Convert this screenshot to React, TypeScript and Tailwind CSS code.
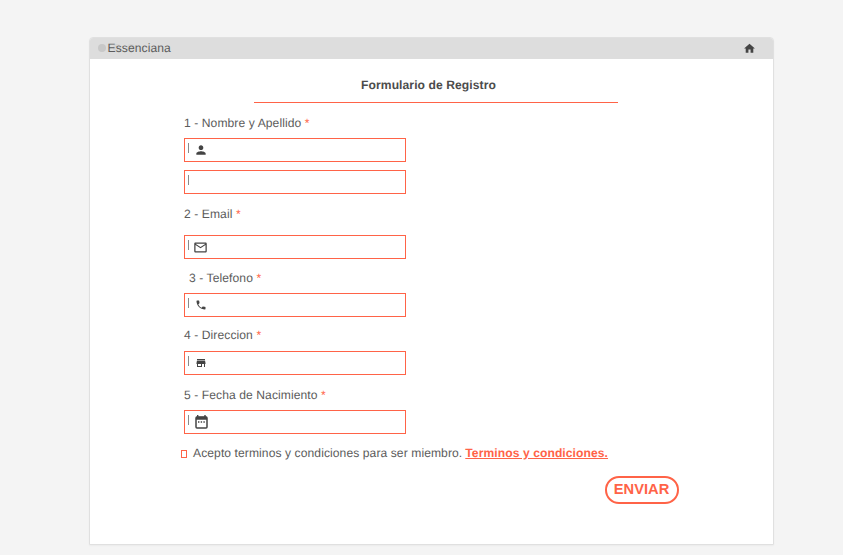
import type { ReactNode } from "react";
import { MdHome, MdPerson, MdMailOutline, MdPhone, MdStore } from "react-icons/md";

function Label({ children, className = "" }: { children: ReactNode; className?: string }) {
  return (
    <label className={`block h-4 whitespace-nowrap leading-4 ${className}`}>
      {children} <span className="text-[#ff6347]">*</span>
    </label>
  );
}

function Field({ icon, className = "" }: { icon?: ReactNode; className?: string }) {
  return (
    <div className={`flex h-6 w-[222px] border border-[#ff6347] ${className}`}>
      <span className="ml-[3px] mt-1 h-[10px] w-px bg-[#8a8a8a]" />
      {icon}
    </div>
  );
}

function CalendarIcon() {
  return (
    <svg viewBox="0 0 13 14" className="ml-[6px] mt-1 h-[14px] w-[13px] text-[#444]" fill="none">
      <path d="M2.7 0v2M10 0v2" stroke="currentColor" strokeWidth="1.4" />
      <rect x="1" y="2" width="11" height="11" rx="1" stroke="currentColor" strokeWidth="1.5" />
      <path d="M1 1.8h11v3H1zM3 6.3h1.4v1.4H3zM5.7 6.3h1.4v1.4H5.7zM8.4 6.3h1.4v1.4H8.4z" fill="currentColor" />
    </svg>
  );
}

export default function App() {
  return (
    <div className="h-[555px] w-full overflow-hidden bg-[#f4f4f4] pl-[89px] pt-[37px] font-['Liberation_Sans',Arial,sans-serif] text-[12.1px] tracking-[0.08px] text-[#5c5c5c] [text-rendering:geometricPrecision]">
      <main className="flex h-[508px] w-[685px] flex-col rounded-t-[4px] border border-[#e0e0e0] bg-white shadow-[0_1px_2px_rgba(0,0,0,0.04)]">
        <header className="flex h-[21px] shrink-0 items-center rounded-t-[3px] bg-[#ddd] pb-[1px] pl-2 pr-[17px]">
          <div className="relative flex items-center">
            <span className="size-2 rounded-full bg-[#c8c8c8]" />
            <span className="absolute left-[15px] size-2 rounded-full bg-[#d4d4d4]" />
            <span className="absolute left-[29px] size-2 rounded-full bg-[#d4d4d4]" />
            <span className="relative ml-[1.5px] leading-4">Essenciana</span>
          </div>
          <MdHome className="ml-auto size-[13px] text-[#444]" />
        </header>
        <h1 className="mt-[18px] h-4 pr-[6px] text-center font-bold leading-4 text-[#4c4c4c]">Formulario de Registro</h1>
        <hr className="ml-[164px] mt-[9px] w-[364px] border-[#ff6347]" />
        <form className="ml-[94px] flex w-[495px] flex-col">
          <Label className="mt-3">1 - Nombre y Apellido</Label>
          <Field className="mt-[7px]" icon={<MdPerson className="ml-[5px] mt-[4px] size-[14px] text-[#444]" />} />
          <Field className="mt-2" />
          <Label className="mt-3">2 - Email</Label>
          <Field className="mt-[13px]" icon={<MdMailOutline className="ml-1 mt-1 size-[15px] text-[#444]" />} />
          <Label className="ml-[5px] mt-[11px]">3 - Telefono</Label>
          <Field className="mt-[7px]" icon={<MdPhone className="ml-[6px] mt-[5px] size-[12px] text-[#444]" />} />
          <Label className="mt-[10px]">4 - Direccion</Label>
          <Field className="mt-2" icon={<MdStore className="ml-[6px] mt-[5px] size-[12px] text-[#444]" />} />
          <Label className="mt-3">5 - Fecha de Nacimiento</Label>
          <Field className="mt-[7px]" icon={<CalendarIcon />} />
          <div className="-ml-[3px] mt-[11px] flex h-4 items-center whitespace-nowrap leading-4">
            <span className="mr-[6px] mt-[2px] h-2 w-[6px] border border-[#ff6347]" />
            <span>Acepto terminos y condiciones para ser miembro.</span>
            <a className="ml-[3px] font-bold text-[#ff6347] underline">Terminos y condiciones.</a>
          </div>
          <button type="button" className="mt-[15px] h-7 w-[74px] self-end rounded-full border-2 border-[#ff6347] pb-[1px] pr-[1px] text-[14.7px] font-bold leading-none tracking-normal text-[#ff6347]">ENVIAR</button>
        </form>
      </main>
    </div>
  );
}
